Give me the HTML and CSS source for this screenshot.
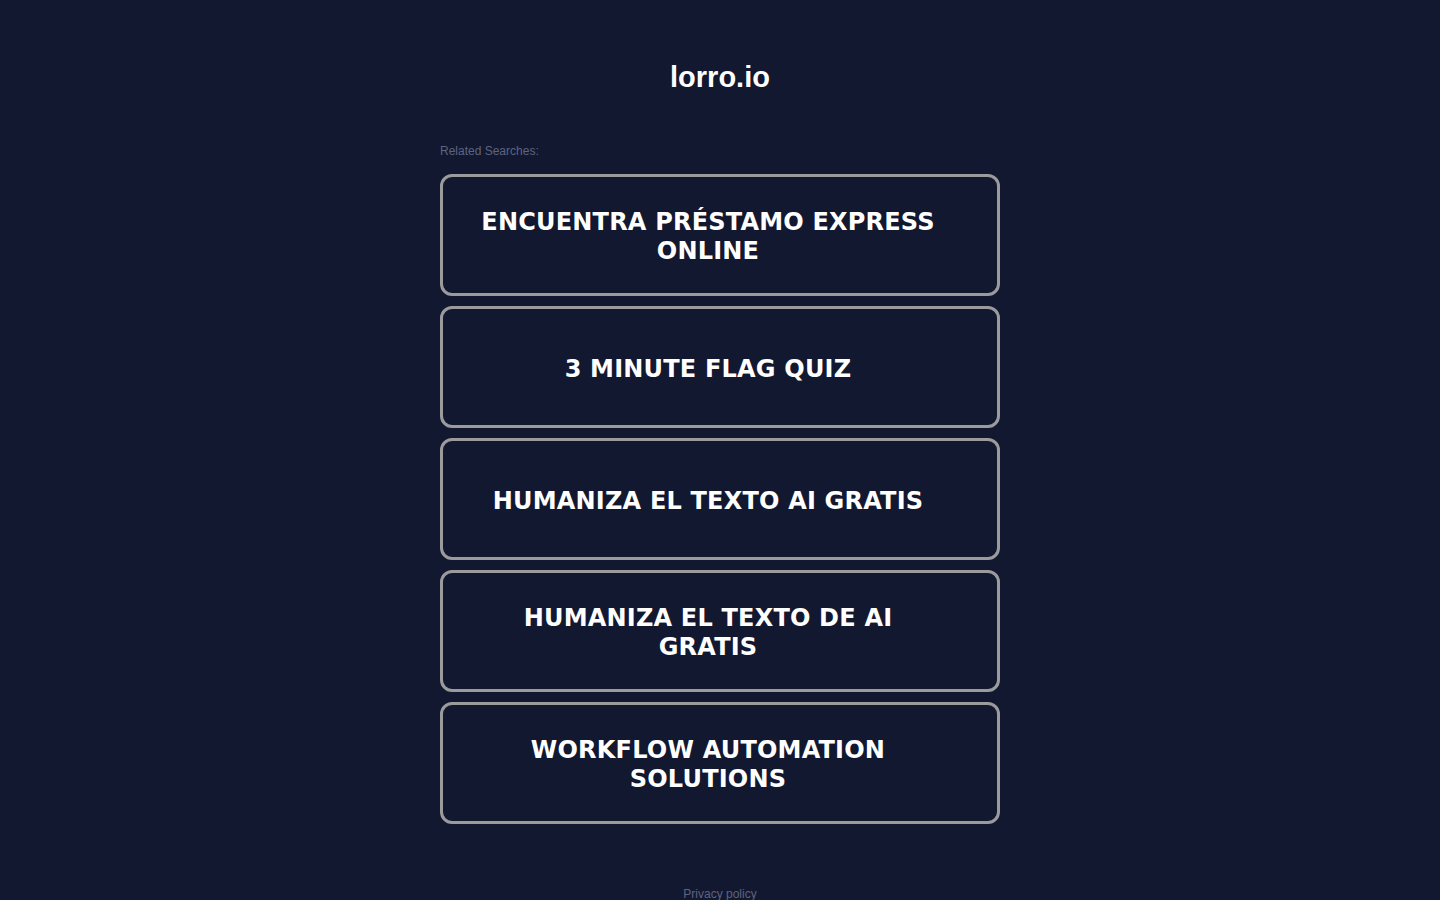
FILE: index.html
```html
<!DOCTYPE html>
<html lang="en">
<head>
<meta charset="utf-8">
<title>lorro.io</title>
<link rel="stylesheet" href="styles.css">
</head>
<body>
<div class="page">
  <header class="header"><h1 class="logo">lorro.io</h1></header>
  <main class="main">
    <div class="related">Related Searches:</div>
    <ul class="list">
      <li><a class="item" href="#"><span class="label">ENCUENTRA PRÉSTAMO EXPRESS ONLINE</span></a></li>
      <li><a class="item" href="#"><span class="label">3 MINUTE FLAG QUIZ</span></a></li>
      <li><a class="item" href="#"><span class="label">HUMANIZA EL TEXTO AI GRATIS</span></a></li>
      <li><a class="item" href="#"><span class="label">HUMANIZA EL TEXTO DE AI GRATIS</span></a></li>
      <li><a class="item" href="#"><span class="label">WORKFLOW AUTOMATION SOLUTIONS</span></a></li>
    </ul>
  </main>
  <footer class="footer"><a class="privacy" href="#">Privacy policy</a></footer>
</div>
</body>
</html>
```
FILE: styles.css
```css
html, body {
  margin: 0;
  padding: 0;
  background: #121830;
}
body {
  font-family: "Liberation Sans", Arial, sans-serif;
  color: #fff;
}
.page {
  width: 560px;
  margin: 0 auto;
  display: flex;
  flex-direction: column;
}
.header {
  padding-top: 60px;
  display: flex;
  justify-content: center;
}
.logo {
  margin: 0;
  font-family: "Liberation Sans", Arial, sans-serif;
  font-weight: 700;
  font-size: 29px;
  line-height: 34px;
  color: #fff;
}
.main {
  padding-top: 50px;
}
.related {
  font-size: 12px;
  line-height: 14px;
  color: #5d6480;
  margin-bottom: 16px;
}
.list {
  list-style: none;
  margin: 0;
  padding: 0;
  display: flex;
  flex-direction: column;
  gap: 10px;
}
.item {
  box-sizing: border-box;
  height: 122px;
  border: 3px solid #9b9b9e;
  border-radius: 12px;
  display: flex;
  align-items: center;
  justify-content: center;
  padding: 4px 56px 0 32px;
  text-decoration: none;
}
.label {
  font-family: "DejaVu Sans", Verdana, sans-serif;
  font-weight: 700;
  font-size: 24px;
  line-height: 29px;
  letter-spacing: 0.2px;
  text-align: center;
  color: #fff;
}
.footer {
  padding-top: 63px;
  display: flex;
  justify-content: center;
}
.privacy {
  font-size: 12px;
  line-height: 14px;
  color: #5d6480;
  text-decoration: none;
}
```
